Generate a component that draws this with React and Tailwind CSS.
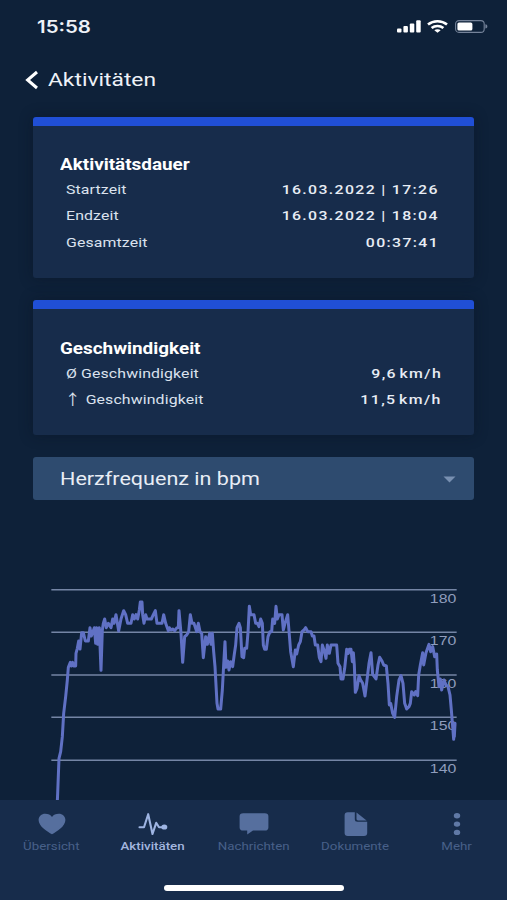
const durationRows = [
  { label: 'Startzeit', value: '16.03.2022 | 17:26' },
  { label: 'Endzeit', value: '16.03.2022 | 18:04' },
  { label: 'Gesamtzeit', value: '00:37:41' },
];

const gridLines = [
  { y: 29, label: '180' },
  { y: 157, label: '170' },
  { y: 285, label: '160' },
  { y: 412, label: '150' },
  { y: 541, label: '140' },
];

const heartRate = [
  // warm up
  '52,664 53,640 57,535 62,515 67,470 71,400 77,350 82,300 85,262 91,247 94,258 98,247 101,258 107,258 108,220 112,205',
  '116,183 120,207 125,158 130,158 136,183 145,183 150,143 154,168 159,155 163,143 167,190 170,143 173,193 178,143 183,271',
  '187,150 190,130 194,117 199,143 205,130 213,143 218,117 222,130 228,104 236,153 243,117 251,92 257,104 263,130 273,130',
  '278,104 283,117 288,104 293,117 298,90 301,66 306,66 308,104 312,130 317,104 321,117 334,117 340,104 346,92 351,130',
  '366,130 371,104 377,130 385,152 388,143 393,150 398,147 404,152 411,143 415,143 417,92 423,160 428,247 434,170 440,165',
  // middle part
  '446,155 451,104 456,130 462,130 470,155 475,130 480,155 485,160 490,233 497,170 502,193 509,160 513,193 517,160 521,215',
  '525,260 531,370 534,387 542,387 547,330 551,255 555,185 558,262 563,243 567,270 572,245 578,260 583,222 587,195 591,143',
  '597,130 601,143 606,230 611,233 614,205 620,205 624,158 628,79 632,104 642,104 647,130 652,130 657,140 662,117 667,130',
  '670,195 674,208 679,208 684,170 690,155 695,155 698,117 704,130 708,79 712,117 717,104 726,104 730,150 735,130 743,104',
  '748,165 752,215 760,260 766,210 770,222 776,195 781,185 786,155 792,150 797,143 803,155 813,155 817,168 822,168 826,195',
  '833,195 838,233 843,245 847,195 852,210 858,235 862,195 868,220 873,195 890,195 894,250 900,260 903,297 909,297',
  // last minutes
  '914,265 920,208 925,220 928,208 933,208 937,245 940,218 943,255 946,337 951,325 957,287 962,300 968,310 975,348 981,300',
  '987,250 993,218 998,283 1008,297 1014,255 1019,232 1026,243 1031,255 1039,258 1044,310 1048,375 1052,370 1058,400 1064,412',
  '1070,350 1077,300 1083,287 1089,310 1094,370 1100,387 1107,380 1111,370 1115,335 1123,345 1127,335 1133,347 1136,285',
  '1141,255 1148,218 1151,255 1158,218 1167,193 1172,215 1178,200 1184,230 1190,222 1192,270 1197,320 1201,297 1205,330',
  '1212,300 1218,315 1224,320 1230,345 1234,390 1238,440 1241,478 1245,430 1243,470',
].join(' ');

const StatusBar = () => (
  <div className="flex h-[53px] shrink-0 items-center justify-between pl-[37px] pr-[19px]">
    <span className="origin-left scale-x-[1.2] font-[Inter] text-[17px] leading-5 font-semibold text-[#eef2f8]">15:58</span>
    <div className="flex items-center">
      <svg width="24" height="13" viewBox="0 0 24 13" fill="#fff">
        <rect x="0" y="8.5" width="4.5" height="4" rx="1" />
        <rect x="6.4" y="6" width="4.5" height="6.5" rx="1" />
        <rect x="12.8" y="3.4" width="4.5" height="9.1" rx="1" />
        <rect x="19.2" y="0.3" width="4.5" height="12.2" rx="1" />
      </svg>
      <svg className="ml-[6px]" width="21" height="13" viewBox="0 0 21 13" fill="none" stroke="#fff" strokeWidth="2.6">
        <path d="M1 4.6C6.3 0.2 14.7 0.2 20 4.6" />
        <path d="M4.6 8.1C8 5.3 13 5.3 16.4 8.1" />
        <path d="M7.3 10.2C9.2 8.8 11.8 8.8 13.7 10.2L10.5 12.8Z" fill="#fff" stroke="none" />
      </svg>
      <svg className="ml-[7px]" width="33" height="13" viewBox="0 0 33 13">
        <rect x="0.6" y="0.6" width="28.6" height="11.8" rx="3.4" fill="none" stroke="#75839a" strokeWidth="1.1" />
        <rect x="2.4" y="2.4" width="15" height="8.2" rx="1.6" fill="#fff" />
        <path d="M30.4 4.2C33 4.8 33 8 30.4 8.6Z" fill="#75839a" />
      </svg>
    </div>
  </div>
);

const Card = ({ title, children, className }) => (
  <section className={`overflow-hidden rounded-[3px] border-t-[9px] border-[#204fd6] bg-[#172c4b] shadow-[0_0_14px_rgba(8,18,34,0.45)] ${className}`}>
    <h2 className="ml-[27px] w-max origin-left scale-x-[1.18] text-[16px] leading-6 font-bold text-white">{title}</h2>
    {children}
  </section>
);

const Row = ({ label, value, valueClass }) => (
  <div className="flex h-[26.4px] items-center justify-between pl-[33px] text-[13px] text-[#dbe2ee]">
    <span className="origin-left scale-x-[1.22] tracking-[0.1px]">{label}</span>
    <span className={`origin-right scale-x-[1.22] font-medium text-[#e8edf5] ${valueClass}`}>{value}</span>
  </div>
);

const Chart = () => (
  <svg className="mt-[79px] ml-[40px] block shrink-0" width="420" height="220" viewBox="0 0 1260 660">
    {gridLines.map(({ y, label }) => (
      <g key={label}>
        <line x1="34" x2="1250" y1={y} y2={y} stroke="#7485a5" strokeWidth="4.5" />
        <text transform={`translate(1249 ${y + 39}) scale(1.22 1)`} textAnchor="end" fontSize="39" fill="#8f9dbd" fontFamily="Liberation Sans, sans-serif">
          {label}
        </text>
      </g>
    ))}
    <polyline points={heartRate} fill="none" stroke="#6071c4" strokeWidth="9" strokeLinejoin="round" strokeLinecap="round" />
  </svg>
);

const HeartIcon = () => (
  <svg width="28" height="24" viewBox="0 0 28 24" fill="#566f9e">
    <path d="M14 22.3C9.4 19.5 0.6 14.5 0.6 8C0.6 4.4 3.5 1.8 7.2 1.8C10.2 1.8 12.6 3 14 5C15.4 3 17.8 1.8 20.8 1.8C24.5 1.8 27.4 4.4 27.4 8C27.4 14.5 18.6 19.5 14 22.3Z" />
  </svg>
);

const PulseIcon = () => (
  <svg width="30" height="24" viewBox="0 0 30 24" fill="none" stroke="#9eb4e2" strokeWidth="2.1" strokeLinejoin="round" strokeLinecap="round">
    <path d="M1.5 15.2H6L10.2 2.2L14.5 22L18.2 10.8L21 15.2H25" />
    <ellipse cx="26.3" cy="15" rx="3" ry="2.6" fill="#9eb4e2" stroke="none" />
  </svg>
);

const ChatIcon = () => (
  <svg width="30" height="24" viewBox="0 0 30 24" fill="#566f9e">
    <path d="M4.2 1.2H25.8Q29.4 1.2 29.4 4.3V15.4Q29.4 18.5 25.8 18.5H14L8.2 22.5V18.5H4.2Q0.6 18.5 0.6 15.4V4.3Q0.6 1.2 4.2 1.2Z" />
  </svg>
);

const DocumentIcon = () => (
  <svg width="24" height="24" viewBox="0 0 24 24" fill="#566f9e">
    <path d="M3.8 0.3H10.8V7.5Q10.8 9.7 13.3 9.7H23.2V21Q23.2 24 20 24H3.8Q0.6 24 0.6 21V3.3Q0.6 0.3 3.8 0.3Z" />
    <path d="M12.5 0.5L22.6 8.4H14Q12.5 8.4 12.5 7Z" />
  </svg>
);

const MoreIcon = () => (
  <svg width="24" height="24" viewBox="0 0 24 24" fill="#6079a6">
    <ellipse cx="12" cy="3.8" rx="3.2" ry="2.7" />
    <ellipse cx="12" cy="12.1" rx="3.2" ry="2.7" />
    <ellipse cx="12" cy="20.4" rx="3.2" ry="2.7" />
  </svg>
);

const tabs = [
  { label: 'Übersicht', icon: HeartIcon },
  { label: 'Aktivitäten', icon: PulseIcon, active: true },
  { label: 'Nachrichten', icon: ChatIcon },
  { label: 'Dokumente', icon: DocumentIcon },
  { label: 'Mehr', icon: MoreIcon },
];

const App = () => (
  <div className="flex h-[900px] w-[507px] flex-col overflow-hidden bg-[#0e2139] font-[Roboto,sans-serif]">
    <StatusBar />
    <header className="flex h-[53px] shrink-0 items-center pl-[25px]">
      <svg width="13" height="20" viewBox="0 0 13 20" fill="none" stroke="#fff" strokeWidth="3">
        <path d="M12 2L2.6 10L12 18" />
      </svg>
      <h1 className="ml-[10px] origin-left scale-x-[1.2] text-[19px] leading-6 text-[#eef2f8]">Aktivitäten</h1>
    </header>

    <main className="flex shrink-0 flex-col px-[33px] pt-[11px]">
      <Card title="Aktivitätsdauer" className="h-[161px] pt-[26.5px]">
        {durationRows.map((row) => (
          <Row key={row.label} {...row} valueClass="mr-[35px] tracking-[1.1px]" />
        ))}
      </Card>
      <Card title="Geschwindigkeit" className="mt-[22px] h-[135px] pt-[27.5px]">
        <Row label="Ø Geschwindigkeit" value={<>9,6<span className="ml-[2px]">km/h</span></>} valueClass="mr-[32px] tracking-[1.15px]" />
        <Row
          label={<><span className="mr-[4px] -ml-px inline-block scale-y-[1.15] font-['Noto_Sans_CJK_JP','DejaVu_Sans'] text-[13px] leading-4">↑</span>Geschwindigkeit</>}
          value={<>11,5<span className="ml-[2px]">km/h</span></>}
          valueClass="mr-[32px] tracking-[1.15px]"
        />
      </Card>
      <button className="mt-[22px] mb-px flex h-[43px] items-center justify-between rounded-[3px] bg-[#2e4b6f] pr-[18px] pl-[27px] text-[#e8edf5]">
        <span className="mt-[2px] origin-left scale-x-[1.165] text-[18.5px]">Herzfrequenz in bpm</span>
        <svg className="mt-px" width="13" height="7" viewBox="0 0 13 7" fill="#7890b1">
          <path d="M0.5 0.5H12.5L6.5 6.5Z" />
        </svg>
      </button>
    </main>

    <Chart />

    <nav className="grid h-[100px] shrink-0 grid-cols-5 grid-rows-[85px_1fr] bg-[#172c4b]">
      {tabs.map(({ label, icon: Icon, active }) => (
        <div key={label} className="flex flex-col items-center pt-[12px] pl-[2px]">
          <Icon />
          <span className={`mt-[3px] -ml-px scale-x-[1.21] text-[11px] leading-4 ${active ? 'font-medium text-[#a3b6df]' : 'text-[#486089]'}`}>{label}</span>
        </div>
      ))}
      <div className="col-span-5 mx-auto h-[6px] w-[180px] rounded-full bg-white" />
    </nav>
  </div>
);

export default App;
